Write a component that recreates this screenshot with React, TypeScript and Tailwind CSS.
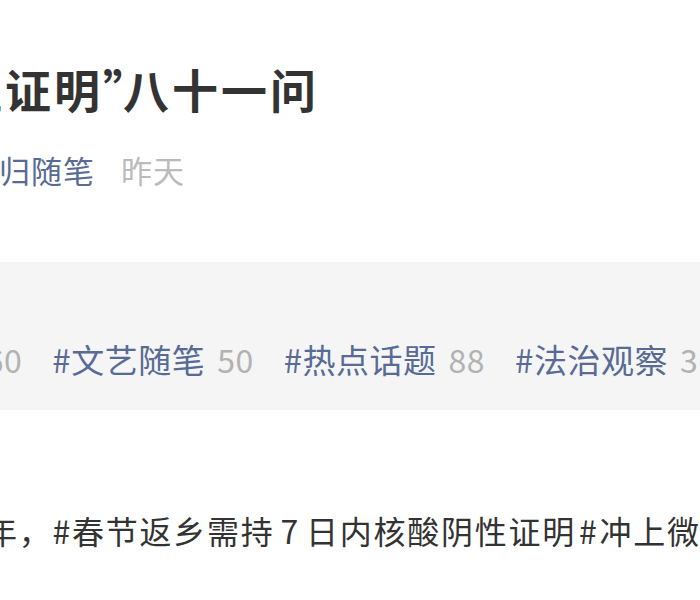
const tags = [
  { name: "#社会民生", count: "60" },
  { name: "#文艺随笔", count: "50" },
  { name: "#热点话题", count: "88" },
  { name: "#法治观察", count: "36" },
];

export default function App() {
  return (
    <div
      className="w-[700px] h-[600px] overflow-hidden bg-white"
      style={{ fontFamily: '"Noto Sans CJK SC", "Noto Sans", sans-serif' }}
    >
      {/* title, cut at the left edge */}
      <h1 className="pt-[65px] -ml-[44px] whitespace-nowrap text-[46px] leading-[46px] font-bold tracking-[3px] text-[#333333]">
        性证明<span className="-mr-[29px]">”</span>八十一问
      </h1>

      {/* account + time */}
      <div className="mt-[43px] -ml-px flex whitespace-nowrap text-[31px] leading-[31px] tracking-[1px]">
        <span className="text-[#576b95]">归随笔</span>
        <span className="ml-[26px] text-[#bbbbbb]">昨天</span>
      </div>

      {/* topic tags */}
      <div className="mt-[77px] h-[148px] bg-[#f5f5f5] pt-[81px]">
        <div className="-ml-[179px] flex gap-[30px] whitespace-nowrap text-[33px] leading-[33px] tracking-[0.5px]">
          {tags.map((t) => (
            <div key={t.name} className="flex shrink-0">
              <span className="text-[#576b95]">{t.name}</span>
              <span className="ml-[12px] text-[32px] text-[#b2b2b2]">{t.count}</span>
            </div>
          ))}
        </div>
      </div>

      {/* body */}
      <p className="mt-[104px] -ml-[15px] whitespace-nowrap text-[32px] leading-[32px] tracking-[1.75px] text-[#333333]">
        年，#春节返乡需持<span className="mx-[6px]">7</span>日内核酸阴性证明
        <span className="ml-[3px] mr-[1px]">#</span>冲上微博热搜
      </p>
    </div>
  );
}
